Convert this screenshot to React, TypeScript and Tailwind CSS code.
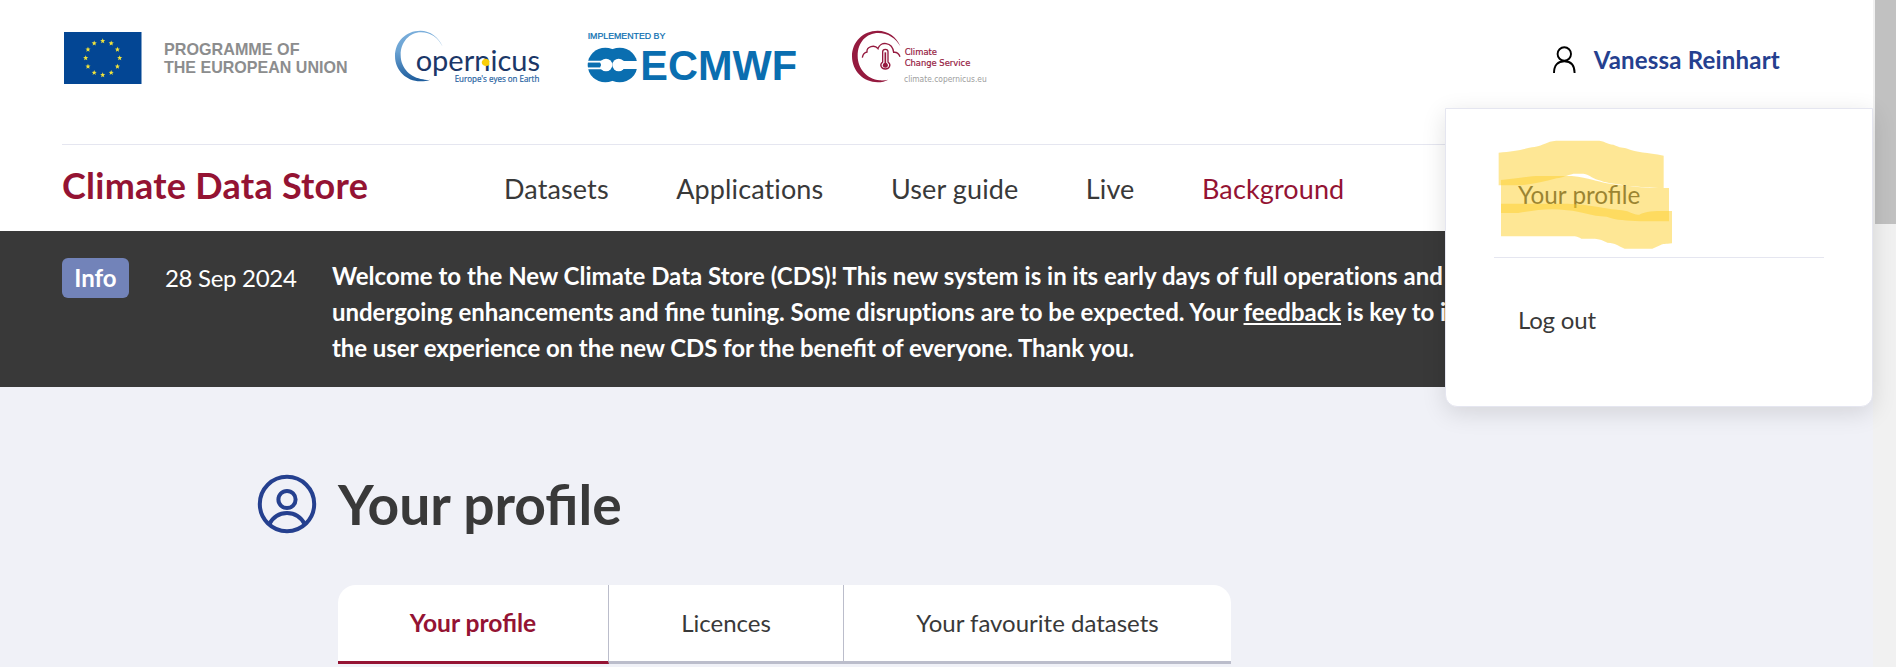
import React from "react";

const NAV = [
  { label: "Datasets" },
  { label: "Applications" },
  { label: "User guide" },
  { label: "Live" },
  { label: "Background", active: true },
];

const STARS = Array.from({ length: 12 }, (_, i) => {
  const a = (i * Math.PI) / 6;
  return { x: 38.7 + 17 * Math.sin(a), y: 26 - 17 * Math.cos(a) };
});

function star(cx: number, cy: number, r: number) {
  return Array.from({ length: 10 }, (_, i) => {
    const a = (i * Math.PI) / 5;
    const q = i % 2 ? r * 0.42 : r;
    return `${(cx + q * Math.sin(a)).toFixed(2)},${(cy - q * Math.cos(a)).toFixed(2)}`;
  }).join(" ");
}

function EuLogo() {
  return (
    <svg className="block h-[52px] w-[286px] shrink-0 overflow-visible" viewBox="0 0 286 52">
      <rect width="77.5" height="52" fill="#034694" />
      {STARS.map((s, i) => (
        <polygon key={i} points={star(s.x, s.y, 2.7)} fill="#f3e43a" />
      ))}
      <g fontFamily="Liberation Sans, sans-serif" fontWeight="700" fontSize="17" fill="#8c8d8e">
        <text x="100" y="23" textLength="135.500" lengthAdjust="spacingAndGlyphs">PROGRAMME OF</text>
        <text x="100" y="41" textLength="183.500" lengthAdjust="spacingAndGlyphs">THE EUROPEAN UNION</text>
      </g>
    </svg>
  );
}

function CopernicusLogo() {
  return (
    <svg className="block h-[56px] w-[147px] shrink-0 overflow-visible" viewBox="42 42 441 168">
      <defs>
        <linearGradient id="cop" x1="0" y1="0" x2="0" y2="1">
          <stop offset="0" stopColor="#7aaedb" />
          <stop offset="0.4" stopColor="#6ba3d3" />
          <stop offset="1" stopColor="#1d5c9c" />
        </linearGradient>
      </defs>
      <path d="M188 95C176 66 151 47 121 47C78 47 45 80 45 123C45 166 79 199 121 199C133 199 143 197 151 194C141 195 135 195 129 193C93 188 62 161 62 120C62 82 88 52 123 52C152 52 174 68 188 95Z" fill="url(#cop)" />
      <g fontFamily="Lato, sans-serif" fontSize="88" fill="#1b3768">
        <text x="107" y="168" textLength="373" lengthAdjust="spacingAndGlyphs">opernicus</text>
      </g>
      <path d="M305 141C308 129 325 127 328 139V150C318 156 305 152 305 141Z" fill="#fbce07" />
      <text x="224" y="200" textLength="254" lengthAdjust="spacingAndGlyphs" fontFamily="Open Sans, sans-serif" fontSize="26" fill="#1f5f9f" stroke="#1f5f9f" strokeWidth=".6">Europe's eyes on Earth</text>
    </svg>
  );
}

function EcmwfLogo() {
  return (
    <svg className="block h-[54px] w-[211px] shrink-0 overflow-visible" viewBox="620 45 633 162">
      <text x="622" y="73" textLength="233" lengthAdjust="spacingAndGlyphs" fontFamily="Liberation Sans, sans-serif" fontSize="27" fill="#0a6eb0" stroke="#0a6eb0" strokeWidth=".7">IMPLEMENTED BY</text>
      <g fill="#0a6eb0">
        <ellipse cx="675" cy="150" rx="53" ry="52" />
        <ellipse cx="718" cy="150" rx="53" ry="52" />
      </g>
      <g fill="#fff">
        <circle cx="677" cy="150" r="19" />
        <circle cx="715" cy="150" r="19" />
        <path d="M722 138H775V162H722ZM618 137H668V143H618ZM618 157H668V163H618Z" />
      </g>
      <path d="M623 143.500H659C663 147 663 153 659 156.500H623Z" fill="#0a6eb0" />
      <text x="780" y="195" textLength="470" lengthAdjust="spacingAndGlyphs" fontFamily="Liberation Sans, sans-serif" fontWeight="700" fontSize="126" fill="#0a6eb0">ECMWF</text>
    </svg>
  );
}

function ClimateLogo() {
  return (
    <svg className="block h-[56px] w-[138px] shrink-0 overflow-visible" viewBox="63 42 414 168">
      <path d="M211 94C200 66 174 47 143 47C99 47 66 81 66 124C66 168 101 202 143 202C155 202 166 199 175 194C166 196 157 197 149 196C111 191 83 162 83 122C83 82 109 54 145 54C174 54 197 70 211 94Z" fill="#951a3f" />
      <path d="M97 128C99 116 105 112 111 111C109 94 134 88 144 101C150 78 187 80 191 112C200 111 207 117 210 125" fill="none" stroke="#951a3f" strokeWidth="4" />
      <path d="M158 141V110C158 101 174 101 174 110V141C185 149 178 162 166 162C154 162 147 149 158 141Z" fill="#fff" stroke="#951a3f" strokeWidth="4" />
      <circle cx="166" cy="151" r="7.5" fill="#951a3f" />
      <path d="M166 112V151" stroke="#951a3f" strokeWidth="5" />
      <g fontFamily="DejaVu Sans, sans-serif" fontSize="26">
        <text x="224" y="121" textLength="97" lengthAdjust="spacingAndGlyphs" fill="#951a3f" stroke="#951a3f" strokeWidth=".6">Climate</text>
        <text x="224" y="152" textLength="197" lengthAdjust="spacingAndGlyphs" fill="#951a3f" stroke="#951a3f" strokeWidth=".6">Change Service</text>
        <text x="222" y="202" textLength="248" lengthAdjust="spacingAndGlyphs" fill="#9c9c9c">climate.copernicus.eu</text>
      </g>
    </svg>
  );
}

function Highlight() {
  return (
    <svg className="absolute top-[139px] left-[1498px] h-[112px] w-[176px]" viewBox="234 357 528 336">
      <g fill="#fecf2c" fillOpacity=".5">
        <path d="M236 398C280 394 310 388 336 382C380 375 380 362 415 362H538C560 366 560 372 580 374C600 384 610 382 622 386C650 398 680 396 731 407V504C690 504 660 500 625 498C590 490 560 490 543 482C520 478 510 464 490 461H460C440 466 430 472 410 475C370 486 340 492 300 496H236Z" />
        <path d="M243 480C290 475 330 468 360 468H455C510 474 530 484 560 490C600 496 640 500 690 504H747V604H660C620 600 590 602 560 590C510 590 490 574 440 571C390 564 350 570 295 579H243Z" />
        <path d="M243 551H440C480 552 500 555 530 560C580 570 600 568 622 574C640 582 650 586 658 584C680 572 710 573 756 573V670C735 673 730 671 722 675L697 686H614C590 676 590 670 562 668C540 656 535 656 484 656C470 649 465 649 455 649H243Z" />
      </g>
    </svg>
  );
}

export default function App() {
  return (
    <div className="relative flex h-[667px] w-[1896px] overflow-hidden bg-[#f0f1f7] font-['Lato',sans-serif] text-2xl text-[#393939]">
      <div className="flex w-[1873px] shrink-0 flex-col">
        <header className="h-[231px] bg-white px-[62px]">
          <div className="flex h-36 items-start pt-[30px]">
            <div className="mt-[2px] ml-[2px]"><EuLogo /></div>
            <div className="ml-[44px] -mt-[1px]"><CopernicusLogo /></div>
            <div className="ml-[46px]"><EcmwfLogo /></div>
            <div className="ml-[53px] -mt-[1px]"><ClimateLogo /></div>
            <div className="mt-[14px] ml-auto flex items-center gap-[18px] pr-[31px]">
              <svg className="h-7 w-6" viewBox="0 0 24 28" fill="none" stroke="#000" strokeWidth="1.9">
                <circle cx="12.3" cy="8" r="6.7" />
                <path d="M2 27C2 19 6 15.200 12.3 15.200S22.6 19 22.6 27" />
              </svg>
              <span className="font-bold tracking-[0.2px] text-[#25408f]">Vanessa Reinhart</span>
            </div>
          </div>
          <div className="flex h-[87px] items-start border-t border-[#e5e6f0]">
            <h1 className="mt-[13px] w-[442px] text-4xl leading-[54px] font-bold tracking-[0.25px] text-[#941333]">Climate Data Store</h1>
            <nav className="mt-[24px] flex gap-[67.5px] text-[27px] leading-[40px] tracking-[0.12px]">
              {NAV.map((n) => (
                <a key={n.label} className={n.active ? "text-[#941333]" : ""}>{n.label}</a>
              ))}
            </nav>
          </div>
        </header>
        <section className="flex h-[156px] items-start bg-[#393939] px-[62px] pt-[27px] leading-9 text-white">
          <span className="flex h-10 w-[67px] items-center justify-center rounded-[6px] bg-[#7283b9] font-bold">Info</span>
          <span className="mt-[2px] ml-9 w-[167px] tracking-[-0.3px]">28 Sep 2024</span>
          <p className="font-bold tracking-[-0.07px] whitespace-nowrap">
            <span className="tracking-[0.01px]">Welcome to the New Climate Data Store (CDS)! This new system is in its early days of full operations and still</span>
            <br />
            <span className="tracking-[-0.03px]">
              undergoing enhancements and <span className="tracking-normal">fine</span> tuning. Some disruptions are to be expected. Your <a className="underline">feedback</a> is key to improve
            </span>
            <br />
            the user experience on the new CDS for the <span className="tracking-normal">benefit</span> of everyone. Thank you.
          </p>
        </section>
        <main className="pl-[257px]">
          <div className="mt-[87px] flex items-center gap-[21px]">
            <svg className="h-[60px] w-[60px]" viewBox="0 0 60 60" fill="none" stroke="#25408f" strokeWidth="4">
              <circle cx="30" cy="30" r="27.2" />
              <circle cx="30" cy="25.5" r="8.6" />
              <path d="M12 50.5C20 35 40 35 48 50.5" />
            </svg>
            <h2 className="text-[55.2px] leading-[60px] font-bold">Your profile</h2>
          </div>
          <div className="mt-[51px] ml-[81px] flex h-[79px] w-[893px] overflow-hidden rounded-t-[18px] bg-white text-center leading-[76px]">
            <div className="w-[271px] shrink-0 border-r border-b-[3px] border-r-[#bbbdcb] border-b-[#941333] text-[24.6px] font-bold text-[#941333]">Your profile</div>
            <div className="w-[235px] shrink-0 border-r border-b-[3px] border-[#bbbdcb]">Licences</div>
            <div className="grow border-b-[3px] border-[#bbbdcb]">Your favourite datasets</div>
          </div>
        </main>
      </div>
      <aside className="flex grow justify-end bg-[#f1f1f1]">
        <div className="h-[224px] w-[21px] bg-[#c1c1c1]" />
      </aside>
      <div className="absolute top-[108px] left-[1445px] h-[299px] w-[428px] rounded-b-xl border border-[#e5e6f0] bg-white px-12 shadow-[0_6px_24px_rgba(0,0,0,0.12)]">
        <div className="h-[149px] border-b border-[#e5e6f0] pt-[68px] pl-6 text-[24.3px] leading-9">Your profile</div>
        <div className="pt-[44px] pl-6 leading-9 tracking-[-0.2px]">Log out</div>
      </div>
      <Highlight />
    </div>
  );
}
